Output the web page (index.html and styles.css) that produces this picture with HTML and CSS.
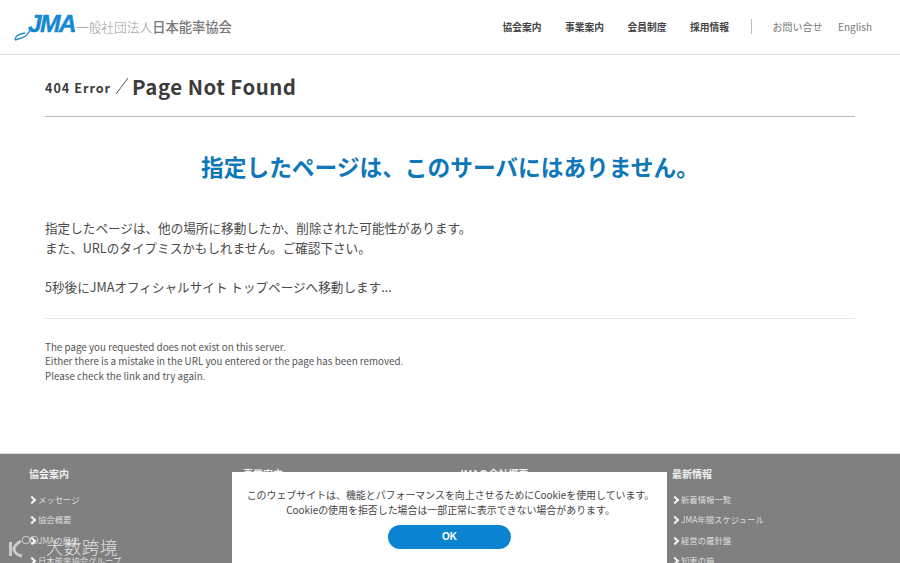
FILE: index.html
```html
<!DOCTYPE html>
<html lang="ja">
<head>
<meta charset="utf-8">
<title>404 Error / Page Not Found</title>
<link rel="stylesheet" href="styles.css">
</head>
<body>
<div class="page">
  <header class="site-header">
    <a class="logo">
      <svg class="logo-swoosh" width="26" height="28" viewBox="0 0 26 28"><path d="M1 27 C5 25.5 9 25 11.5 23 C14 21 15 19 16 17" fill="none" stroke="#2a8fd0" stroke-width="1.5"/><path d="M1 27 C1 24 4 21 11 20" fill="none" stroke="#2a8fd0" stroke-width="1.3"/></svg>
      <span class="logo-jma">JMA</span>
      <span class="logo-pre">一般社団法人</span><span class="logo-name">日本能率協会</span>
    </a>
    <nav class="nav">
      <a class="nav-main">協会案内</a>
      <a class="nav-main">事業案内</a>
      <a class="nav-main">会員制度</a>
      <a class="nav-main">採用情報</a>
      <span class="nav-sep"></span>
      <a class="nav-sub">お問い合せ</a>
      <a class="nav-sub">English</a>
    </nav>
  </header>

  <main class="content">
    <h1 class="page-title"><span class="title-code">404 Error</span><svg class="title-slash" width="14" height="18" viewBox="0 0 14 18"><path d="M13 1 L1 17" stroke="#555" stroke-width="1" fill="none"/></svg><span class="title-text">Page Not Found</span></h1>
    <h2 class="headline">指定したページは、このサーバにはありません。</h2>
    <p class="lead">指定したページは、他の場所に移動したか、削除された可能性があります。<br>また、URLのタイプミスかもしれません。ご確認下さい。</p>
    <p class="lead redirect">5秒後にJMAオフィシャルサイト トップページへ移動します...</p>
    <p class="english">The page you requested does not exist on this server.<br>Either there is a mistake in the URL you entered or the page has been removed.<br>Please check the link and try again.</p>
  </main>

  <footer class="site-footer">
    <div class="foot-col">
      <h3>協会案内</h3>
      <ul><li>メッセージ</li><li>協会概要</li><li>JMAの歴史</li><li>日本能率協会グループ</li></ul>
    </div>
    <div class="foot-col">
      <h3>事業案内</h3>
    </div>
    <div class="foot-col">
      <h3>JMAの会社概要</h3>
    </div>
    <div class="foot-col">
      <h3>最新情報</h3>
      <ul><li>新着情報一覧</li><li>JMA年間スケジュール</li><li>経営の羅針盤</li><li>知恵の箱</li></ul>
    </div>
  </footer>

  <div class="cookie">
    <p>このウェブサイトは、機能とパフォーマンスを向上させるためにCookieを使用しています。<br>Cookieの使用を拒否した場合は一部正常に表示できない場合があります。</p>
    <button class="cookie-ok">OK</button>
  </div>

  <div class="watermark">
    <svg width="34" height="24" viewBox="0 0 34 24"><path d="M3.5 7 V21 M14 6 C9 9 7 12 7 14 C7 17 10 20 15 21" fill="none" stroke="#fff" stroke-opacity=".8" stroke-width="3"/><circle cx="19" cy="5" r="3.8" fill="none" stroke="#fff" stroke-opacity=".8"/><circle cx="27" cy="5" r="3.8" fill="none" stroke="#fff" stroke-opacity=".8"/></svg>
    <span>大数跨境</span>
  </div>
</div>
</body>
</html>
```

FILE: styles.css
```css
* { box-sizing: border-box; margin: 0; padding: 0; }
html, body { height: 563px; overflow: hidden; }
body { background: #fff; font-family: "Noto Sans CJK JP", "Noto Sans", sans-serif; color: #444; }
.page { position: relative; width: 900px; height: 563px; overflow: hidden; display: flex; flex-direction: column; }

.site-header { flex: none; height: 55px; border-bottom: 1px solid #ddd; display: flex; align-items: center; justify-content: space-between; padding: 0 28px 2px 14px; }
.logo { display: flex; align-items: center; height: 28px; position: relative; }
.logo-swoosh { position: absolute; left: 0; top: 1px; }
.logo-jma { margin: -4px 0 0 14px; font: italic bold 24.6px/28px "Liberation Sans", sans-serif; -webkit-text-stroke: .4px #1489d0; color: #1489d0; letter-spacing: -1.7px; width: 48px; }
.logo-pre { font-size: 12.7px; color: #999; font-weight: 300; }
.logo-name { font-size: 13.3px; color: #777; font-weight: 500; }
.nav { display: flex; align-items: center; margin-top: 1px; }
.nav-main { font-size: 9.75px; font-weight: 700; color: #444; margin-right: 23.5px; }
.nav-sep { width: 1px; height: 15px; background: #bbb; margin: 0 21px 0 -2px; }
.nav-sub { font-size: 10px; color: #777; margin-right: 15.5px; }
.nav-sub:last-child { margin-right: 0; }

.content { flex: none; height: 398px; padding: 0 45px; }
.page-title { height: 62px; border-bottom: 1px solid #bbb; display: flex; align-items: center; color: #3c3c3c; padding-top: 1px; }
.title-code { font-size: 12.6px; letter-spacing: 1px; font-weight: 700; margin-top: 3px; }
.title-slash { margin: 0 3px 0 4px; flex: none; }
.title-text { font-size: 20.4px; letter-spacing: .5px; font-weight: 700; }
.headline { margin-top: 33px; text-align: center; color: #0d77b9; font-size: 22.7px; line-height: 34px; font-weight: 700; }
.lead { margin-top: 34px; font-size: 12.6px; line-height: 19.6px; color: #4a4a4a; }
.redirect { margin-top: 20px; padding-bottom: 21px; border-bottom: 1px solid #e6e6e6; }
.english { margin-top: 21px; font-size: 9.83px; line-height: 14.7px; color: #555; }

.site-footer { flex: 1; background: #808080; border-top: 1px solid #ddd; padding: 12px 0 0 29px; display: grid; grid-template-columns: 214px 215px 214px 1fr; color: #eee; }
.foot-col h3 { font-size: 10px; line-height: 16px; font-weight: 700; margin-bottom: 10px; }
.foot-col ul { list-style: none; }
.foot-col li { font-size: 8.4px; line-height: 14px; margin-bottom: 6.4px; padding-left: 9px; position: relative; color: #ddd; }
.foot-col li::before { content: ""; position: absolute; left: 0; top: 5px; width: 4px; height: 4px; border-top: 2px solid #f2f2f2; border-right: 2px solid #f2f2f2; transform: rotate(45deg); }

.cookie { position: absolute; left: 232px; top: 472px; width: 435px; height: 91px; background: #fff; padding-top: 15px; text-align: center; }
.cookie p { font-size: 9.93px; line-height: 15px; color: #444; padding-left: 2px; }
.cookie-ok { display: block; margin: 8px auto 0; width: 123px; height: 24px; border: 0; border-radius: 12px; background: #0a84d0; color: #fff; font: 700 10px/24px "Liberation Sans", sans-serif; }

.watermark { position: absolute; left: 7px; top: 534px; display: flex; align-items: center; color: #fff; opacity: .75; }
.watermark span { font-size: 17.5px; line-height: 26px; letter-spacing: 0.4px; margin-left: 5px; font-weight: 300; }
```
